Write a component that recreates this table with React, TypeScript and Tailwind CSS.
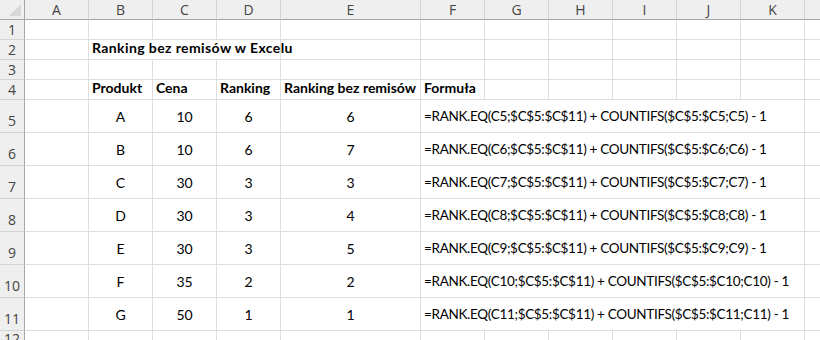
const COLS = ["A", "B", "C", "D", "E", "F", "G", "H", "I", "J", "K", "L"];

const products = [
  { name: "A", price: 10, rank: 6, unique: 6 },
  { name: "B", price: 10, rank: 6, unique: 7 },
  { name: "C", price: 30, rank: 3, unique: 3 },
  { name: "D", price: 30, rank: 3, unique: 4 },
  { name: "E", price: 30, rank: 3, unique: 5 },
  { name: "F", price: 35, rank: 2, unique: 2 },
  { name: "G", price: 50, rank: 1, unique: 1 },
];

const cell = "border-r border-b border-[#dedede] whitespace-nowrap overflow-visible";
const font = { fontFamily: "Lato, 'Liberation Sans', sans-serif" };
const headFont = { fontFamily: "'Open Sans', 'Noto Sans', sans-serif" };

function RowHead({ n, tall }: { n: number; tall?: boolean }) {
  return (
    <div
      className={`bg-[#efefef] border-r border-r-[#a6a6a6] border-b border-b-[#d4d4d4] flex justify-center text-[14px] text-[#444] ${
        tall ? "items-end pb-[1px]" : "items-center"
      }`}
      style={headFont}
    >
      {n}
    </div>
  );
}

function Empty({ n = 1 }: { n?: number }) {
  return (
    <>
      {Array.from({ length: n }).map((_, i) => (
        <div key={i} className={cell} />
      ))}
    </>
  );
}

export default function App() {
  return (
    <div className="w-[820px] h-[340px] overflow-hidden bg-white text-black" style={font}>
      <div className="w-[869px] grid grid-cols-[25px_64px_64px_64px_64px_140px_64px_64px_64px_64px_64px_64px_64px] grid-rows-[20px_20px_20px_20px_20px_repeat(7,33px)_20px]">
        {/* column headers */}
        <div className="bg-[#efefef] border-r border-r-[#a6a6a6] border-b border-b-[#a6a6a6] relative">
          <div className="absolute right-[3px] bottom-[3px] w-0 h-0 border-l-[12px] border-l-transparent border-b-[12px] border-b-[#d8d8d8]" />
        </div>
        {COLS.map((c) => (
          <div
            key={c}
            className="bg-[#efefef] border-r border-r-[#d4d4d4] border-b border-b-[#a6a6a6] flex items-center justify-center text-[14px] text-[#444]"
            style={headFont}
          >
            {c}
          </div>
        ))}

        {/* row 1 */}
        <RowHead n={1} />
        <Empty n={12} />

        {/* row 2: title spills over B..D */}
        <RowHead n={2} />
        <Empty />
        <div className={`${cell} col-span-3 flex items-end pl-[3px] pb-[1px] text-[14px] font-bold tracking-[0.4px]`}>
          Ranking bez remisów w Excelu
        </div>
        <Empty n={8} />

        {/* row 3 */}
        <RowHead n={3} />
        <Empty n={12} />

        {/* row 4: table header */}
        <RowHead n={4} />
        <Empty />
        {["Produkt", "Cena", "Ranking", "Ranking bez remisów", "Formuła"].map((h) => (
          <div key={h} className={`${cell} flex items-end pl-[3px] pb-[1px] text-[14px] font-bold`}>
            {h}
          </div>
        ))}
        <Empty n={6} />

        {/* rows 5-11 */}
        {products.map((p, i) => {
          const r = i + 5;
          return (
            <div key={p.name} className="contents">
              <RowHead n={r} tall />
              <Empty />
              {[p.name, p.price, p.rank, p.unique].map((v, j) => (
                <div key={j} className={`${cell} flex items-center justify-center text-[14px]`}>
                  {v}
                </div>
              ))}
              <div className={`${cell} col-span-6 flex items-center pl-[3px] text-[13.5px] tracking-[-0.32px]`}>
                {`=RANK.EQ(C${r};$C$5:$C$11) + COUNTIFS($C$5:$C${r};C${r}) - 1`}
              </div>
              <Empty />
            </div>
          );
        })}

        {/* row 12 */}
        <RowHead n={12} tall />
        <Empty n={12} />
      </div>
    </div>
  );
}
